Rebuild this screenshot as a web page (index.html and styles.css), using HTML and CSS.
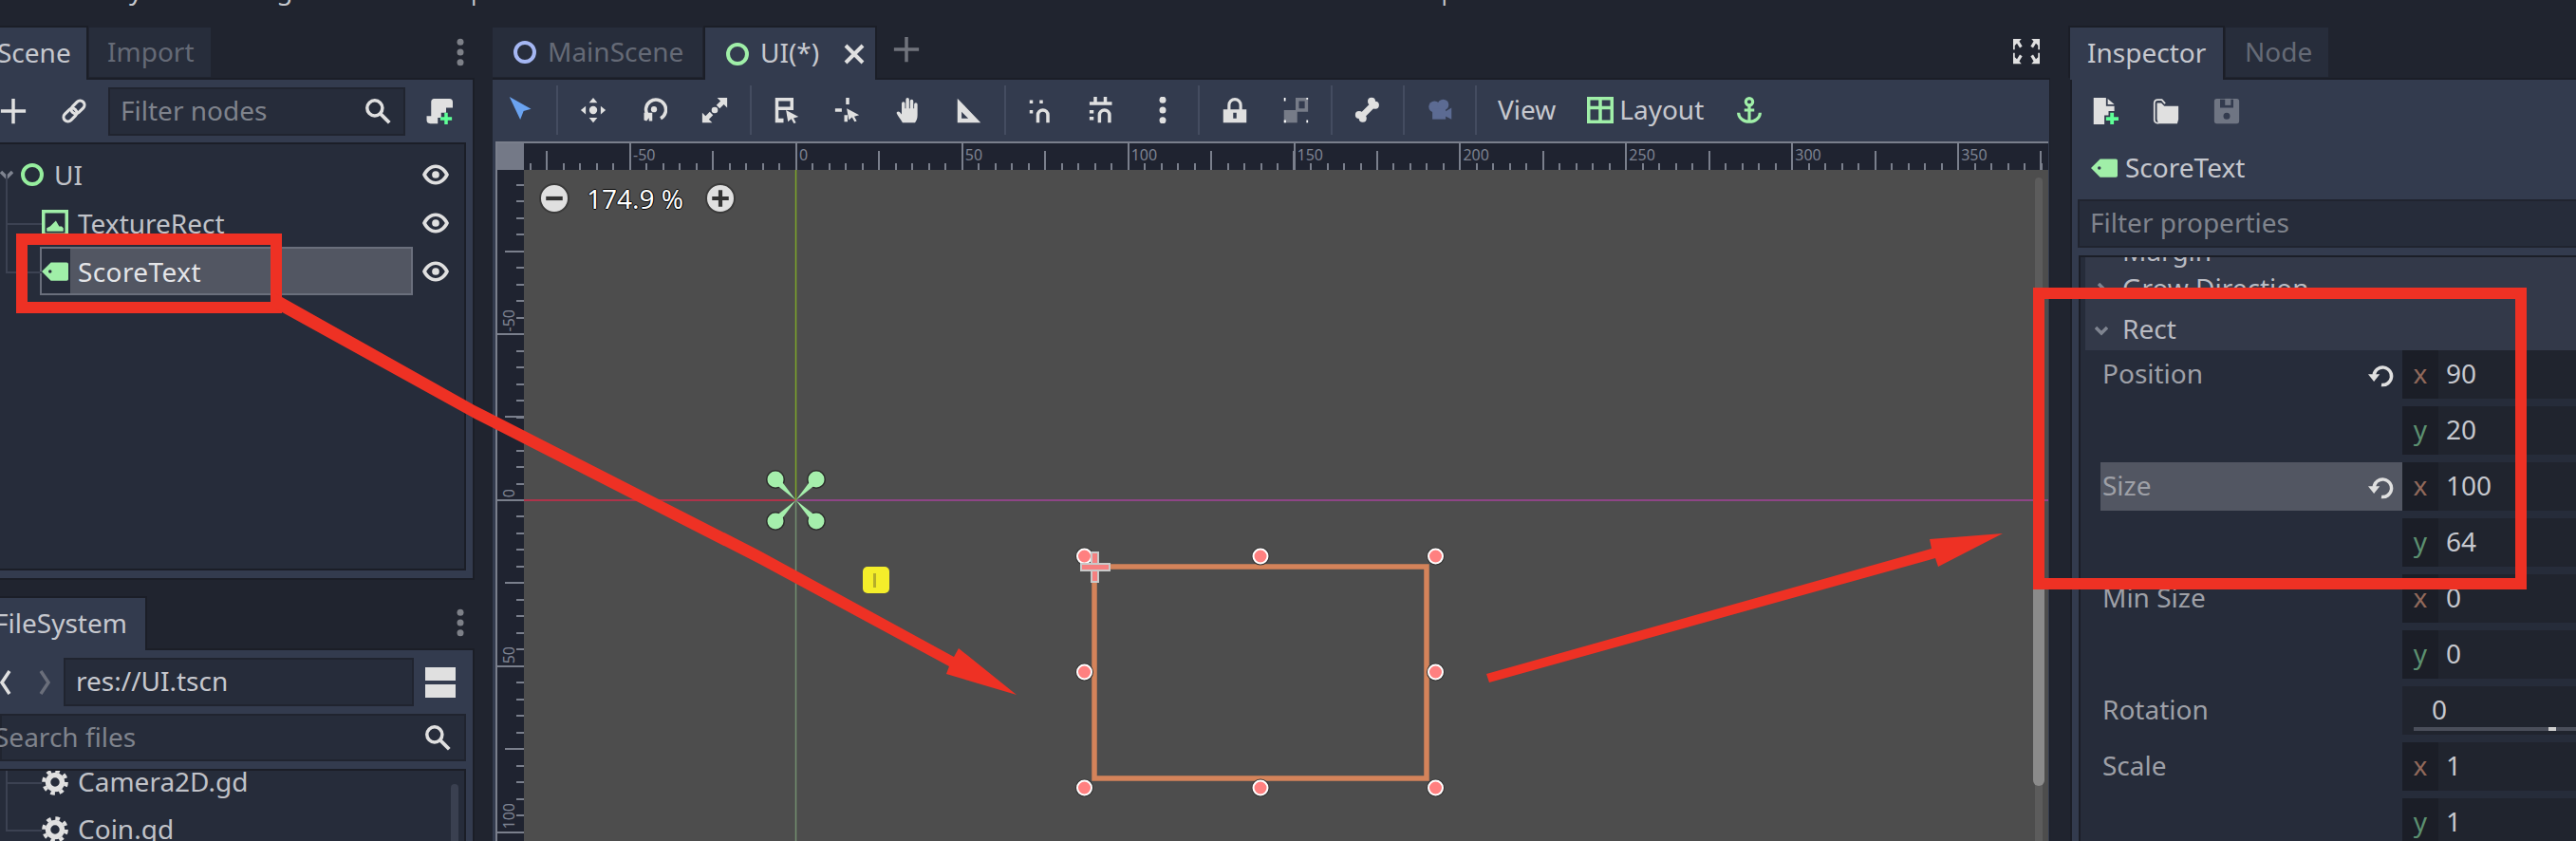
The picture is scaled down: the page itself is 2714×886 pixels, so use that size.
FILE: index.html
```html
<!DOCTYPE html>
<html lang="en">

<head>
    <meta charset="utf-8">
    <title>Godot Editor - UI</title>
    <link rel="stylesheet" href="styles.css">
</head>

<body>
    <!--Icon sheet, all icons are drawn on a 16x16 grid-->
    <svg class="icon-sheet" xmlns="http://www.w3.org/2000/svg">
        <symbol id="i-plus" viewBox="0 0 16 16"><path d="M7 0.5h2V7h6.5v2H9v6.5H7V9H0.5V7H7z"/></symbol>
        <symbol id="i-link" viewBox="0 0 16 16"><g fill="none" stroke="currentColor" stroke-width="1.8" transform="rotate(-45 8 8)"><rect x="0.2" y="5.4" width="9" height="5.2" rx="2.6"/><rect x="6.8" y="5.4" width="9" height="5.2" rx="2.6"/></g></symbol>
        <symbol id="i-search" viewBox="0 0 16 16"><circle cx="6.2" cy="6.2" r="4.6" fill="none" stroke="currentColor" stroke-width="2"/><path d="M9.5 9.5l5.5 5.5" stroke="currentColor" stroke-width="2.2"/></symbol>
        <symbol id="i-script-add" viewBox="0 0 16 16"><path d="M4.5 0.5H14a2 2 0 0 1 2 2V6h-4v3H9v3H7v3.5H2.5a2.2 2.2 0 0 1-2.2-2.2V11H3V2.5a2 2 0 0 1 1.5-2z" fill="#e0e0e0"/><path d="M11 9h2v2.500h2.500v2H13V16h-2v-2.500H8.500v-2H11z" fill="#5fff97"/></symbol>
        <symbol id="i-eye" viewBox="0 0 16 16"><path fill-rule="evenodd" d="M8 2C4.500 2 1.500 4.500 0 8c1.500 3.500 4.500 6 8 6s6.500-2.500 8-6c-1.500-3.500-4.500-6-8-6zM8 4c2.400 0 4.300 1.700 5.600 4-1.300 2.300-3.200 4-5.600 4S3.700 10.300 2.400 8C3.700 5.700 5.600 4 8 4z"/><circle cx="8" cy="8" r="2.200"/></symbol>
        <symbol id="i-ring" viewBox="0 0 16 16"><circle cx="8" cy="8" r="5.700" fill="none" stroke="currentColor" stroke-width="2.300"/></symbol>
        <symbol id="i-texture" viewBox="0 0 16 16"><rect x="1" y="1" width="14" height="14" fill="none" stroke="currentColor" stroke-width="2"/><path d="M3 13v-2l2-1 2-2 1.500-1.500L10.500 10H12l1 1v2z"/></symbol>
        <symbol id="i-label" viewBox="0 0 16 16"><path fill-rule="evenodd" d="M5.500 2.500H15a1 1 0 0 1 1 1v9a1 1 0 0 1-1 1H5.500L0 8zM5 7a1 1 0 1 0 0 2 1 1 0 0 0 0-2z"/></symbol>
        <symbol id="i-gear" viewBox="0 0 16 16"><circle cx="8" cy="8" r="4.300" fill="none" stroke="currentColor" stroke-width="3.200"/><circle cx="8" cy="8" r="6.800" fill="none" stroke="currentColor" stroke-width="2.200" stroke-dasharray="2.670 2.670"/></symbol>
        <symbol id="i-select" viewBox="0 0 16 16"><path d="M1 0l13 7.300-4.500 1.200-2 5.200z"/></symbol>
        <symbol id="i-move" viewBox="0 0 16 16"><path d="M8 0.500l2.500 3h-5zM8 15.500l-2.500-3h5zM0.500 8l3-2.500v5zM15.500 8l-3-2.500v5z"/><circle cx="8" cy="8" r="2.400"/></symbol>
        <symbol id="i-rotate" viewBox="0 0 16 16"><path d="M4.500 11.500A6 6 0 1 1 12 13" fill="none" stroke="currentColor" stroke-width="2"/><path d="M2 9.500h5v5H5v-1.800l-1.500 1.800-1.500-0.500z"/><circle cx="8" cy="7.500" r="1.800"/></symbol>
        <symbol id="i-scale" viewBox="0 0 16 16"><circle cx="8" cy="8" r="1.900"/><path d="M9.500 0.500H15.500V6.500L13.500 4.500 11 7 9 5 11.500 2.500zM6.500 15.500H0.500V9.500L2.500 11.500 5 9 7 11 4.500 13.500z"/></symbol>
        <symbol id="i-list-select" viewBox="0 0 16 16"><path fill-rule="evenodd" d="M1 0.500h11V8H3v5h3v2.500H1zM3 2.500V6h7V2.500z"/><path d="M7.500 8l7.500 4-3 0.800 1.500 2.700-1.300 0.500-1.500-2.700-2 1.700z"/></symbol>
        <symbol id="i-pivot" viewBox="0 0 16 16"><path d="M7 0.500h2v4H7zM0.500 7h4v2h-4zM6 11h2v4H6z"/><path d="M7.500 7l7.500 4-3 0.800 1.500 2.700-1.300 0.500-1.500-2.700-2 1.700z"/></symbol>
        <symbol id="i-hand" viewBox="0 0 16 16"><path d="M4.500 15.500C3.500 13.500 1.500 11.500 1 10c-0.300-1 1-1.600 1.800-0.800L4 10.500V4a1 1 0 0 1 2 0v3h0.500V1.500a1 1 0 0 1 2 0V7H9V2.500a1 1 0 0 1 2 0V7h0.500V4.500a1 1 0 0 1 2 0V11c0 2.300-0.700 3.500-1.500 4.500z"/></symbol>
        <symbol id="i-ruler" viewBox="0 0 16 16"><path fill-rule="evenodd" d="M1 1l14 14.500H1zM3.500 9v4H7.500z"/></symbol>
        <symbol id="i-snap" viewBox="0 0 16 16"><path d="M1 2h2v2H1zM7 2h2v2H7zM1 8h2v2H1z"/><path d="M5 15.500V11a4 4 0 0 1 8 0v4.500h-2V11a2 2 0 0 0-4 0v4.500z"/></symbol>
        <symbol id="i-grid-snap" viewBox="0 0 16 16"><path d="M3 0h2v3h4V0h2v3h3v2H3v3H0.500v2H3v4H0.500v-2H3V5H0.500V3H3z"/><path d="M5.500 15.500V11a4 4 0 0 1 8 0v4.500h-2V11a2 2 0 0 0-4 0v4.500z"/></symbol>
        <symbol id="i-dots" viewBox="0 0 16 16"><circle cx="8" cy="1.800" r="2"/><circle cx="8" cy="8" r="2"/><circle cx="8" cy="14.200" r="2"/></symbol>
        <symbol id="i-lock" viewBox="0 0 16 16"><path d="M4.500 8V5a3.500 3.500 0 0 1 7 0v3" fill="none" stroke="currentColor" stroke-width="1.800"/><path fill-rule="evenodd" d="M1 7.500h14v8H1zM7 9.500v3.500h2V9.500z"/></symbol>
        <symbol id="i-group" viewBox="0 0 16 16"><path fill="#777c88" fill-rule="evenodd" d="M8 0.500h7.500V9H9v6.500H1V8h7zM10 2.500V7h3.500V2.500z"/><path fill="#fff" d="M1 0.500h1v2H1zM14.500 0.500h1v1h-1zM1 14h1.200v1.500H1zM14.500 14h1v1.500h-1z"/></symbol>
        <symbol id="i-bone" viewBox="0 0 16 16"><path d="M5 11l6-6" stroke="currentColor" stroke-width="3.500"/><circle cx="10.300" cy="2.700" r="2.300"/><circle cx="12.500" cy="5" r="2.300"/><circle cx="2.800" cy="10.800" r="2.300"/><circle cx="5" cy="13" r="2.300"/></symbol>
        <symbol id="i-camera" viewBox="0 0 16 16"><circle cx="4.800" cy="6" r="3.500"/><circle cx="10" cy="4.800" r="3.300"/><rect x="3.500" y="7" width="8" height="6.500"/><path d="M11 9l4-2.500v7L11 11.500z"/></symbol>
        <symbol id="i-layout" viewBox="0 0 16 16"><path fill-rule="evenodd" d="M0 0h16v16H0zM2 2v3.500h5V2zM9 2v3.500h5V2zM2 7.500V14h5V7.500zM9 7.500V14h5V7.500z"/></symbol>
        <symbol id="i-anchor" viewBox="0 0 16 16"><circle cx="8" cy="3" r="2.100" fill="none" stroke="currentColor" stroke-width="1.800"/><path d="M8 5v10M5 8h6M1.500 9.500a6.500 5.500 0 0 0 13 0" fill="none" stroke="currentColor" stroke-width="1.800"/></symbol>
        <symbol id="i-fullscreen" viewBox="0 0 16 16"><path d="M0 0.500h5L3.700 2 5.500 5 4 6 2.300 3.300 1 4.500v2.500H0zM16 0.500h-5l1.300 1.500L10.500 5 12 6l1.700-2.700L15 4.500v2.500h1zM0 15.500h5l-1.300-1.500L5.500 11 4 10 2.300 12.700 1 11.500V9H0zM16 15.500h-5l1.300-1.500L10.500 11 12 10l1.700 2.700L15 11.500V9h1z"/></symbol>
        <symbol id="i-doc-add" viewBox="0 0 16 16"><path d="M1 0h7.500v5h5v3H10v2.500H7.500V16H1zM9.500 0.500l4 3.500h-4z" fill="#e0e0e0"/><path d="M11 9h2.200v2.500H16v2.200h-2.800V16H11v-2.300H8.500v-2.200H11z" fill="#5fff97"/></symbol>
        <symbol id="i-folder" viewBox="0 0 16 16"><path d="M3.500 15.200A2 2 0 0 1 1 13.500V3a2 2 0 0 1 2-1.800h2.500L7.500 3.500" fill="none" stroke="currentColor" stroke-width="1"/><path d="M2.600 13V3.200h2.600L7 5h8.500v8l-0.700 2.500H3.500z"/></symbol>
        <symbol id="i-save" viewBox="0 0 16 16"><path fill-rule="evenodd" d="M2 0.500h12a1.500 1.500 0 0 1 1.500 1.500v12a1.500 1.500 0 0 1-1.500 1.500H2A1.500 1.500 0 0 1 0.500 14V2A1.500 1.500 0 0 1 2 0.500zM4 1v5h8V1zM8 9a2 2 0 1 0 0 4 2 2 0 0 0 0-4z"/><rect x="7" y="0.500" width="3.500" height="4"/></symbol>
        <symbol id="i-reset" viewBox="0 0 16 16"><path d="M3.500 8A5.300 5.300 0 1 1 8 14" fill="none" stroke="currentColor" stroke-width="2"/><path d="M0 7.500h7L3.500 12z"/></symbol>
    </svg>

    <!--Bottom of the cropped window title above the docks-->
    <div class="top-strip">
        <span class="strip-y">y</span><span class="strip-g">g</span><span class="strip-bar">|</span><span class="strip-bar-two">|</span>
    </div>

    <div class="docks">
        <!--Left docks-->
        <div class="dock-left">
            <div class="tabs">
                <div class="tab tab-active tab-scene"><span>Scene</span></div>
                <div class="tab tab-import"><span>Import</span></div>
                <svg class="dock-menu"><use href="#i-dots"/></svg>
            </div>
            <div class="panel panel-scene">
                <div class="scene-bar">
                    <svg class="icon bar-add"><use href="#i-plus"/></svg>
                    <svg class="icon bar-link"><use href="#i-link"/></svg>
                    <div class="line-edit filter-nodes">
                        <span class="placeholder">Filter nodes</span>
                        <svg class="icon"><use href="#i-search"/></svg>
                    </div>
                    <svg class="icon bar-script"><use href="#i-script-add"/></svg>
                </div>
                <div class="tree tree-scene">
                    <div class="tree-row row-root">
                        <svg class="tree-chevron" viewBox="0 0 14 14"><path d="M1 4l6 6 6-6"/></svg>
                        <svg class="icon icon-ring"><use href="#i-ring"/></svg>
                        <span class="tree-text">UI</span>
                        <svg class="icon icon-eye"><use href="#i-eye"/></svg>
                    </div>
                    <div class="tree-row row-child">
                        <svg class="icon icon-green"><use href="#i-texture"/></svg>
                        <span class="tree-text child-text">TextureRect</span>
                        <svg class="icon icon-eye"><use href="#i-eye"/></svg>
                    </div>
                    <div class="tree-row row-child row-last">
                        <div class="tree-selected">
                            <div class="selected-icon"><svg class="icon icon-green"><use href="#i-label"/></svg></div>
                            <span class="tree-text selected-text">ScoreText</span>
                        </div>
                        <svg class="icon icon-eye"><use href="#i-eye"/></svg>
                    </div>
                </div>
            </div>

            <div class="tabs tabs-files">
                <div class="tab tab-active tab-files"><span>FileSystem</span></div>
                <svg class="dock-menu"><use href="#i-dots"/></svg>
            </div>
            <div class="panel panel-files">
                <div class="path-bar">
                    <svg class="nav-arrow nav-back" viewBox="0 0 14 28"><path d="M11 2L3 14l8 12"/></svg>
                    <svg class="nav-arrow nav-next" viewBox="0 0 14 28"><path d="M3 2l8 12-8 12"/></svg>
                    <div class="line-edit path-edit"><span>res://UI.tscn</span></div>
                    <svg class="split-icon" viewBox="0 0 32 32"><path d="M0 0h32v14H0zM0 18h32v14H0z"/></svg>
                </div>
                <div class="line-edit search-files">
                    <span class="placeholder">Search files</span>
                    <svg class="icon"><use href="#i-search"/></svg>
                </div>
                <div class="tree tree-files">
                    <div class="file-row">
                        <svg class="icon"><use href="#i-gear"/></svg>
                        <span class="tree-text">Camera2D.gd</span>
                    </div>
                    <div class="file-row">
                        <svg class="icon"><use href="#i-gear"/></svg>
                        <span class="tree-text">Coin.gd</span>
                    </div>
                    <div class="files-scroll"></div>
                </div>
            </div>
        </div>

        <!--Main viewport-->
        <div class="dock-center">
            <div class="tabs">
                <div class="tab scene-tab">
                    <svg class="icon icon-blue"><use href="#i-ring"/></svg>
                    <span>MainScene</span>
                </div>
                <div class="tab tab-active scene-tab scene-tab-active">
                    <svg class="icon icon-green"><use href="#i-ring"/></svg>
                    <span>UI(*)</span>
                    <svg class="tab-close" viewBox="0 0 22 22"><path d="M2 2l18 18M20 2L2 20"/></svg>
                </div>
                <svg class="icon tab-add"><use href="#i-plus"/></svg>
                <svg class="icon tab-fullscreen"><use href="#i-fullscreen"/></svg>
            </div>
            <div class="panel panel-center">
                <div class="tool-bar">
                    <div class="tool tool-first icon-select"><svg class="icon"><use href="#i-select"/></svg></div>
                    <div class="tool-sep"></div>
                    <div class="tool"><svg class="icon"><use href="#i-move"/></svg></div>
                    <div class="tool"><svg class="icon"><use href="#i-rotate"/></svg></div>
                    <div class="tool"><svg class="icon"><use href="#i-scale"/></svg></div>
                    <div class="tool-sep"></div>
                    <div class="tool"><svg class="icon"><use href="#i-list-select"/></svg></div>
                    <div class="tool"><svg class="icon"><use href="#i-pivot"/></svg></div>
                    <div class="tool"><svg class="icon"><use href="#i-hand"/></svg></div>
                    <div class="tool"><svg class="icon"><use href="#i-ruler"/></svg></div>
                    <div class="tool-sep"></div>
                    <div class="tool"><svg class="icon"><use href="#i-snap"/></svg></div>
                    <div class="tool"><svg class="icon"><use href="#i-grid-snap"/></svg></div>
                    <div class="tool"><svg class="icon"><use href="#i-dots"/></svg></div>
                    <div class="tool-sep"></div>
                    <div class="tool"><svg class="icon"><use href="#i-lock"/></svg></div>
                    <div class="tool"><svg class="icon"><use href="#i-group"/></svg></div>
                    <div class="tool-sep"></div>
                    <div class="tool"><svg class="icon"><use href="#i-bone"/></svg></div>
                    <div class="tool-sep"></div>
                    <div class="tool icon-camera"><svg class="icon"><use href="#i-camera"/></svg></div>
                    <div class="tool-sep"></div>
                    <span class="tool-view">View</span>
                    <svg class="icon icon-green layout-icon"><use href="#i-layout"/></svg>
                    <span class="tool-layout">Layout</span>
                    <svg class="icon icon-green anchor-icon"><use href="#i-anchor"/></svg>
                </div>
                <div class="viewport">
                    <div class="ruler-corner"></div>
                    <div class="ruler-top">
                        <span>-50</span><span>0</span><span>50</span><span>100</span><span>150</span><span>200</span><span>250</span><span>300</span><span>350</span>
                    </div>
                    <div class="ruler-left">
                        <span class="ruler-first"><i>-50</i></span><span><i>0</i></span><span><i>50</i></span><span><i>100</i></span>
                    </div>
                    <div class="canvas">
                        <!--Things placed in the 2D scene, in page coordinates-->
                        <svg class="canvas-art" viewBox="551 179 1606 707" xmlns="http://www.w3.org/2000/svg">
                            <defs>
                                <g id="gizmo-arm">
                                    <circle cx="-21.500" cy="-22" r="10" fill="#2c2c2c"/>
                                    <circle cx="-21.500" cy="-22" r="8.500" fill="#a5efac"/>
                                    <path d="M0 0L-18 -24L-24 -19z" fill="#a5efac"/>
                                </g>
                                <g id="handle">
                                    <circle r="9.500" fill="#333"/>
                                    <circle r="7.500" fill="#ff8080" stroke="#fff" stroke-width="2"/>
                                </g>
                            </defs>
                            <path d="M551 527H837.500" class="axis-x-neg"/>
                            <path d="M837.500 527H2157" class="axis-x-pos"/>
                            <path d="M837.500 179V527" class="axis-y-neg"/>
                            <path d="M837.500 527V886" class="axis-y-pos"/>
                            <use href="#gizmo-arm" transform="translate(837.500 527)"/>
                            <use href="#gizmo-arm" transform="translate(837.500 527) scale(-1 1)"/>
                            <use href="#gizmo-arm" transform="translate(837.500 527) scale(1 -1)"/>
                            <use href="#gizmo-arm" transform="translate(837.500 527) scale(-1 -1)"/>
                            <rect x="908" y="597" width="28" height="28" rx="5" fill="#f4ee2a"/>
                            <rect x="919" y="604" width="3" height="15" fill="#b5ae2a"/>
                            <rect x="1152" y="597" width="350" height="223" class="control-rect"/>
                            <use href="#handle" x="1141.500" y="586"/>
                            <use href="#handle" x="1327" y="586"/>
                            <use href="#handle" x="1511.500" y="586"/>
                            <use href="#handle" x="1141.500" y="708"/>
                            <use href="#handle" x="1511.500" y="708"/>
                            <use href="#handle" x="1141.500" y="830"/>
                            <use href="#handle" x="1327" y="830"/>
                            <use href="#handle" x="1511.500" y="830"/>
                            <rect x="1149" y="582" width="7" height="31" class="pivot-cross"/>
                            <rect x="1138" y="594" width="30" height="7" class="pivot-cross"/>
                        </svg>
                        <div class="zoom-box">
                            <div class="zoom-btn"><svg viewBox="0 0 16 16"><path d="M3 6.800h10v2.400H3z"/></svg></div>
                            <span class="zoom-text">174.9 %</span>
                            <div class="zoom-btn"><svg viewBox="0 0 16 16"><path d="M6.800 3h2.400v3.800H13v2.400H9.200V13H6.800V9.200H3V6.800h3.800z"/></svg></div>
                        </div>
                        <div class="canvas-track"></div>
                        <div class="canvas-grabber"></div>
                    </div>
                </div>
            </div>
        </div>

        <!--Inspector dock-->
        <div class="dock-right">
            <div class="tabs">
                <div class="tab tab-active tab-inspector"><span>Inspector</span></div>
                <div class="tab tab-node"><span>Node</span></div>
            </div>
            <div class="panel panel-inspector">
                <div class="inspector-bar">
                    <svg class="icon"><use href="#i-doc-add"/></svg>
                    <svg class="icon"><use href="#i-folder"/></svg>
                    <svg class="icon icon-disabled"><use href="#i-save"/></svg>
                </div>
                <div class="inspector-node">
                    <svg class="icon icon-green"><use href="#i-label"/></svg>
                    <span>ScoreText</span>
                </div>
                <div class="line-edit filter-props"><span class="placeholder">Filter properties</span></div>
                <div class="tree tree-props">
                    <div class="sections">
                        <div class="section section-margin"><span>Margin</span></div>
                        <div class="section section-grow">
                            <svg class="section-chevron" viewBox="0 0 14 14"><path d="M4 1l6 6-6 6"/></svg>
                            <span>Grow Direction</span>
                        </div>
                        <div class="section section-rect">
                            <svg class="section-chevron" viewBox="0 0 14 14"><path d="M1 4l6 6 6-6"/></svg>
                            <span>Rect</span>
                        </div>
                    </div>
                    <div class="prop">
                        <div class="prop-label"><span>Position</span><svg class="icon"><use href="#i-reset"/></svg></div>
                        <div class="prop-fields">
                            <div class="field"><span class="axis axis-x">x</span><span class="value">90</span></div>
                            <div class="field"><span class="axis axis-y">y</span><span class="value">20</span></div>
                        </div>
                    </div>
                    <div class="prop">
                        <div class="prop-label prop-hover"><span>Size</span><svg class="icon"><use href="#i-reset"/></svg></div>
                        <div class="prop-fields">
                            <div class="field"><span class="axis axis-x">x</span><span class="value">100</span></div>
                            <div class="field"><span class="axis axis-y">y</span><span class="value">64</span></div>
                        </div>
                    </div>
                    <div class="prop">
                        <div class="prop-label"><span>Min Size</span></div>
                        <div class="prop-fields">
                            <div class="field"><span class="axis axis-x">x</span><span class="value">0</span></div>
                            <div class="field"><span class="axis axis-y">y</span><span class="value">0</span></div>
                        </div>
                    </div>
                    <div class="prop">
                        <div class="prop-label"><span>Rotation</span></div>
                        <div class="prop-fields">
                            <div class="field field-slider">
                                <span class="value">0</span>
                                <div class="slider-track"><div class="slider-grab"></div></div>
                            </div>
                        </div>
                    </div>
                    <div class="prop">
                        <div class="prop-label"><span>Scale</span></div>
                        <div class="prop-fields">
                            <div class="field"><span class="axis axis-x">x</span><span class="value">1</span></div>
                            <div class="field"><span class="axis axis-y">y</span><span class="value">1</span></div>
                        </div>
                    </div>
                </div>
            </div>
        </div>
    </div>

    <!--Red marks painted over the screenshot-->
    <svg class="marks" viewBox="0 0 2714 886" xmlns="http://www.w3.org/2000/svg">
        <rect x="23" y="252" width="268" height="72" class="mark-box"/>
        <rect x="2148" y="309" width="508" height="306" class="mark-box"/>
        <path class="mark-arrow" d="M290 309L500 427L800 580L1005 692L1010 683L1071 732L997 710L1000 702L800 594L500 441L290 325z"/>
        <path class="mark-arrow" d="M1566 710L2035 578L2033 568L2110 562L2042 597L2039 588L1569 719z"/>
    </svg>
</body>

</html>
```

FILE: styles.css
```css
/*Page*/
* {
    box-sizing: border-box;
}

body {
    margin: 0;
    width: 2714px;
    height: 886px;
    overflow: hidden;
    position: relative;
    background: #20242f;
    color: #c6c8ce;
    font-family: "Noto Sans", "Open Sans", sans-serif;
    font-size: 28px;
    line-height: 38px;
}

/*Noto sits a little low in its line box, lift the labels by 1.5px*/
span {
    padding-bottom: 3px;
}

.icon-sheet {
    position: absolute;
    width: 0;
    height: 0;
}

.icon {
    width: 28px;
    height: 28px;
    flex: none;
    color: #e0e0e0;
    fill: currentColor;
}

.icon-green {
    color: #a0efa8;
}

.icon-blue {
    color: #a5b7f3;
}

.icon-disabled {
    color: #6f7583;
}

.placeholder {
    color: #7f838c;
}

/*Top strip*/
.top-strip {
    height: 29px;
    overflow: hidden;
    display: flex;
    align-items: flex-start;
    padding-left: 136px;
}

.top-strip span {
    margin-top: -31px;
    flex: none;
}

.strip-g {
    margin-left: 141px;
}

.strip-bar {
    margin-left: 183px;
}

.strip-bar-two {
    margin-left: 1007px;
}

/*Docks*/
.docks {
    display: flex;
    height: 857px;
}

.dock-left {
    width: 500px;
    flex: none;
}

.dock-center {
    width: 1641px;
    flex: none;
    margin-left: 19px;
}

.dock-right {
    width: 533px;
    flex: none;
    margin-left: 21px;
}

/*Tabs*/
.tabs {
    height: 55px;
    display: flex;
    align-items: flex-start;
    position: relative;
    border-bottom: 2px solid #1b1e27;
}

.tab {
    height: 52px;
    flex: none;
    padding: 0 20px;
    display: flex;
    align-items: center;
    background: #272d3b;
    color: #656a76;
}

.tab-active {
    height: 55px;
    background: #333b4e;
    color: #c6c8ce;
    box-shadow: -2px -2px 0 #1b1e27, 2px -2px 0 #1b1e27;
    position: relative;
}

.tab-scene {
    width: 91px;
    padding: 0;
    text-indent: -3px;
    margin-right: 3px;
}

.tab-import {
    width: 128px;
    padding-left: 19px;
}

.tabs-files {
    margin-top: 19px;
}

.tab-files {
    width: 153px;
    padding: 0;
    text-indent: -6px;
}

.tab-inspector {
    width: 161px;
    padding-left: 18px;
    margin-right: 3px;
}

.tab-node {
    width: 108px;
}

.dock-menu {
    width: 28px;
    height: 36px;
    color: #7d8088;
    fill: currentColor;
    position: absolute;
    left: 471px;
    top: 8px;
}

.scene-tab {
    gap: 10px;
    width: 221px;
    margin-right: 3px;
    padding-left: 20px;
}

.scene-tab-active {
    width: 179px;
    padding: 0 0 0 20px;
}

.tab-close {
    width: 22px;
    height: 22px;
    flex: none;
    margin-left: 16px;
    fill: none;
    stroke: #e0e0e0;
    stroke-width: 4px;
}

.tab-add {
    margin: 9px 0 0 16px;
    color: #70737c;
}

.tab-fullscreen {
    margin: 11px 0 0 1152px;
}

/*Panels*/
.panel {
    background: #333b4e;
}

.panel-scene {
    height: 527px;
    width: 500px;
    border-right: 2px solid #1b1e27;
    border-bottom: 2px solid #1b1e27;
    padding-bottom: 8px;
    display: flex;
    flex-direction: column;
}

.scene-bar {
    height: 66px;
    flex: none;
    display: flex;
    align-items: center;
}

.bar-add {
    margin-right: 36px;
}

.bar-link {
    margin-right: 22px;
}

.bar-script {
    margin-left: 22px;
}

.line-edit {
    height: 51px;
    display: flex;
    align-items: center;
    justify-content: space-between;
    background: #262c3a;
    border: 2px solid #20242f;
    padding: 0 13px 0 11px;
}

.filter-nodes {
    width: 313px;
}

.tree {
    background: #262c3a;
    border: 2px solid #1b1e27;
    border-left: 0;
    border-bottom: 0;
    overflow: hidden;
    position: relative;
}

.tree-scene {
    flex: 1;
    width: 491px;
    padding-top: 6px;
    border-bottom: 2px solid #1b1e27;
}

.tree-scene span {
    padding-bottom: 0;
}

.tree-row {
    height: 51px;
    display: flex;
    align-items: center;
    position: relative;
}

.tree-chevron,
.section-chevron {
    width: 14px;
    height: 14px;
    flex: none;
    fill: none;
    stroke: #7f8490;
    stroke-width: 3.5px;
}

.row-root .icon-ring {
    margin-left: 6px;
    color: #96ee9e;
}

.row-root .tree-text {
    margin-left: 9px;
}

.tree-text {
    color: #c0c2c8;
    white-space: nowrap;
}

.icon-eye {
    margin-left: auto;
    margin-right: 16px;
}

/*Connector lines of the tree*/
.row-child {
    padding-left: 44px;
}

.row-child::before {
    content: '';
    position: absolute;
    left: 6px;
    top: -25px;
    width: 36px;
    height: 51px;
    border-left: 2px solid #3c4252;
    border-bottom: 2px solid #3c4252;
}

.child-text {
    margin-left: 10px;
}

.row-last {
    padding-left: 42px;
}

.tree-selected {
    width: 393px;
    height: 51px;
    display: flex;
    align-items: center;
    background: #525662;
    border: 2px solid #6a6f7c;
}

.selected-icon {
    width: 30px;
    height: 100%;
    background: #262c3a;
    display: flex;
    align-items: center;
}

.selected-text {
    color: #e4e5e8;
    margin-left: 8px;
    letter-spacing: 0.4px;
}

/*FileSystem*/
.panel-files {
    height: 201px;
    width: 500px;
    border-right: 2px solid #1b1e27;
}

.path-bar {
    height: 67px;
    display: flex;
    align-items: center;
}

.nav-arrow {
    width: 14px;
    height: 28px;
    flex: none;
    fill: none;
    stroke-width: 3.5px;
}

.nav-back {
    stroke: #e0e0e0;
    margin-left: -1px;
}

.nav-next {
    stroke: #6a6e7a;
    margin-left: 27px;
}

.path-edit {
    width: 369px;
    margin-left: 13px;
    justify-content: flex-start;
}

.split-icon {
    width: 32px;
    height: 32px;
    margin-left: 12px;
    fill: #e0e0e0;
}

.search-files {
    width: 491px;
    height: 50px;
    padding: 0 14px 0 0;
    text-indent: -8px;
}

.tree-files {
    width: 491px;
    height: 80px;
    margin-top: 8px;
}

.file-row {
    height: 50px;
    display: flex;
    align-items: center;
    gap: 10px;
    padding-left: 44px;
    position: relative;
}

.file-row:first-child {
    margin-top: -13px;
}

.file-row::before {
    content: '';
    position: absolute;
    left: 6px;
    top: -25px;
    width: 36px;
    height: 50px;
    border-left: 2px solid #3c4252;
    border-bottom: 2px solid #3c4252;
}

.files-scroll {
    position: absolute;
    left: 475px;
    top: 14px;
    width: 8px;
    height: 70px;
    background: #3a4050;
    border-radius: 4px 4px 0 0;
}

/*Main viewport*/
.panel-center {
    height: 802px;
    padding-left: 3px;
    padding-right: 3px;
    border-right: 1px solid #1b1e27;
}

.tool-bar {
    height: 65px;
    padding-bottom: 1px;
    display: flex;
    align-items: center;
    margin-left: -3px;
}

.tool {
    width: 64px;
    flex: none;
    display: flex;
    justify-content: center;
}

.tool-first {
    margin-left: -2px;
}

.tool-sep {
    width: 12px;
    height: 52px;
    flex: none;
    background: linear-gradient(#444c60, #444c60) center / 2px 100% no-repeat;
}

.icon-select .icon {
    color: #6ba3f0;
}

.icon-camera .icon {
    color: #5c6b93;
}

.tool-view {
    margin-left: 17px;
}

.layout-icon {
    margin-left: 33px;
}

.tool-layout {
    margin-left: 6px;
}

.anchor-icon {
    margin-left: 34px;
}

.viewport {
    display: grid;
    grid-template-columns: 28px 1606px;
    grid-template-rows: 28px 707px;
    width: 1636px;
    height: 737px;
    border-top: 2px solid #7a7f8c;
    border-left: 2px solid #7a7f8c;
    border-right: 2px solid #7a7f8c;
    background: #1f2330;
}

.ruler-corner {
    background: #747987;
}

/*Ruler ticks: major every 174.9px, medium 87.45px, minor 17.49px*/
.ruler-top {
    display: flex;
    padding-left: 112px;
    overflow: hidden;
    color: #7d8290;
    background-color: #1f2330;
    background-repeat: no-repeat;
    background-position: left bottom;
    background-size: 100% 100%, 100% 20px, 100% 7px;
    background-image:
        repeating-linear-gradient(90deg, transparent 0 111px, #7a7f8c 111px 113px, transparent 113px 174.9px),
        repeating-linear-gradient(90deg, transparent 0 23.4px, #7a7f8c 23.4px 25.4px, transparent 25.4px 87.45px),
        repeating-linear-gradient(90deg, transparent 0 6px, #7a7f8c 6px 8px, transparent 8px 17.49px);
    font-size: 16px;
    line-height: 24px;
}

.ruler-top span {
    width: 174.9px;
    flex: none;
    padding: 0 0 0 3px;
}

.ruler-left {
    display: flex;
    flex-direction: column;
    overflow: hidden;
    color: #7d8290;
    background-color: #1f2330;
    background-repeat: no-repeat;
    background-position: right top;
    background-size: 100% 100%, 20px 100%, 8px 100%;
    background-image:
        repeating-linear-gradient(180deg, transparent 0 172px, #7a7f8c 172px 174px, transparent 174px 174.9px),
        repeating-linear-gradient(180deg, transparent 0 84.6px, #7a7f8c 84.6px 86.6px, transparent 86.6px 87.45px),
        repeating-linear-gradient(180deg, transparent 0 14.7px, #7a7f8c 14.7px 16.7px, transparent 16.7px 17.49px);
    font-size: 16px;
    line-height: 16px;
}

.ruler-left span {
    height: 174.9px;
    flex: none;
    display: flex;
    align-items: flex-end;
    padding: 0 0 3px 4px;
}

.ruler-left .ruler-first {
    height: 173.1px;
}

.ruler-left i {
    font-style: normal;
    writing-mode: vertical-rl;
    transform: rotate(180deg);
}

.canvas {
    background: #4d4d4d;
    position: relative;
    overflow: hidden;
}

.canvas-art {
    position: absolute;
    left: 0;
    top: 0;
    width: 1606px;
    height: 707px;
}

.axis-x-neg,
.axis-x-pos,
.axis-y-neg,
.axis-y-pos {
    fill: none;
    stroke-width: 1.5px;
}

.axis-x-neg {
    stroke: #cf2b4a;
}

.axis-x-pos {
    stroke: #a5439a;
}

.axis-y-neg {
    stroke: #7ea62a;
}

.axis-y-pos {
    stroke: #74906f;
}

.control-rect {
    fill: none;
    stroke: #d4835a;
    stroke-width: 5.5px;
}

.pivot-cross {
    fill: #f58080;
    stroke: #c9c9c9;
    stroke-width: 2px;
}

.zoom-box {
    position: relative;
    display: flex;
    align-items: center;
    height: 32px;
    margin: 14px 0 0 16px;
}

.zoom-btn {
    width: 32px;
    height: 32px;
    flex: none;
    border-radius: 50%;
    background: #e0e0e0;
    border: 2px solid #3a3a3a;
    fill: #333;
}

.zoom-btn svg {
    display: block;
    width: 28px;
    height: 28px;
}

.zoom-text {
    width: 143px;
    padding: 0 0 0 18px;
    color: #fff;
    white-space: nowrap;
    text-shadow: -1px 0 #000, 1px 0 #000, 0 1px #000, 0 -1px #000;
}

.canvas-track {
    position: absolute;
    left: 1592px;
    top: 8px;
    width: 8px;
    height: 699px;
    background: #5c5c5c;
    border-radius: 4px 4px 0 0;
}

.canvas-grabber {
    position: absolute;
    left: 1590px;
    top: 420px;
    width: 12px;
    height: 229px;
    background: #8b8b8b;
    border-radius: 6px;
}

/*Inspector*/
.panel-inspector {
    height: 802px;
    border-left: 2px solid #1b1e27;
    overflow: hidden;
}

.inspector-bar {
    height: 66px;
    display: flex;
    align-items: center;
    gap: 36px;
    padding-left: 21px;
}

.inspector-node {
    height: 54px;
    display: flex;
    align-items: center;
    gap: 8px;
    padding-left: 20px;
}

.filter-props {
    width: 530px;
    margin: 6px 0 0 6px;
    justify-content: flex-start;
}

.tree-props {
    height: 617px;
    margin: 8px 0 0 7px;
    border-right: 0;
    border-left: 2px solid #1b1e27;
}

.sections {
    margin: -31px 0 0 5px;
    background: #333949;
    overflow: hidden;
    height: 129px;
}

.section {
    height: 43px;
    display: flex;
    align-items: center;
    padding-left: 10px;
    gap: 15px;
    color: #b9bbc2;
}

.section-margin {
    padding-top: 7px;
    padding-left: 39px;
}

.prop {
    display: flex;
    margin-bottom: 8px;
    padding-left: 21px;
}

.prop-label {
    width: 318px;
    height: 51px;
    flex: none;
    display: flex;
    align-items: center;
    justify-content: space-between;
    padding: 0 8px 0 2px;
    color: #9ea0a7;
}

.prop-hover {
    background: #525662;
}

.prop-fields {
    flex: 1;
    display: flex;
    flex-direction: column;
    gap: 8px;
}

.field {
    height: 51px;
    display: flex;
    align-items: center;
    background: #20242e;
}

.axis {
    width: 38px;
    height: 100%;
    flex: none;
    display: flex;
    align-items: center;
    justify-content: center;
    background: #1b1e27;
}

.axis-x {
    color: #91695b;
}

.axis-y {
    color: #5c9070;
}

.value {
    padding-left: 8px;
    color: #c6c8ce;
}

.field-slider {
    position: relative;
    padding-left: 23px;
}

.slider-track {
    position: absolute;
    left: 12px;
    right: 0;
    top: 43px;
    height: 4px;
    background: #4a4e5a;
}

.slider-grab {
    position: absolute;
    left: 142px;
    top: 0;
    width: 8px;
    height: 4px;
    background: #cfcfcf;
}

/*Red annotation marks*/
.marks {
    position: absolute;
    left: 0;
    top: 0;
    width: 2714px;
    height: 886px;
}

.mark-box {
    fill: none;
    stroke: #ee3124;
    stroke-width: 12px;
}

.mark-arrow {
    fill: #ee3124;
}
```
